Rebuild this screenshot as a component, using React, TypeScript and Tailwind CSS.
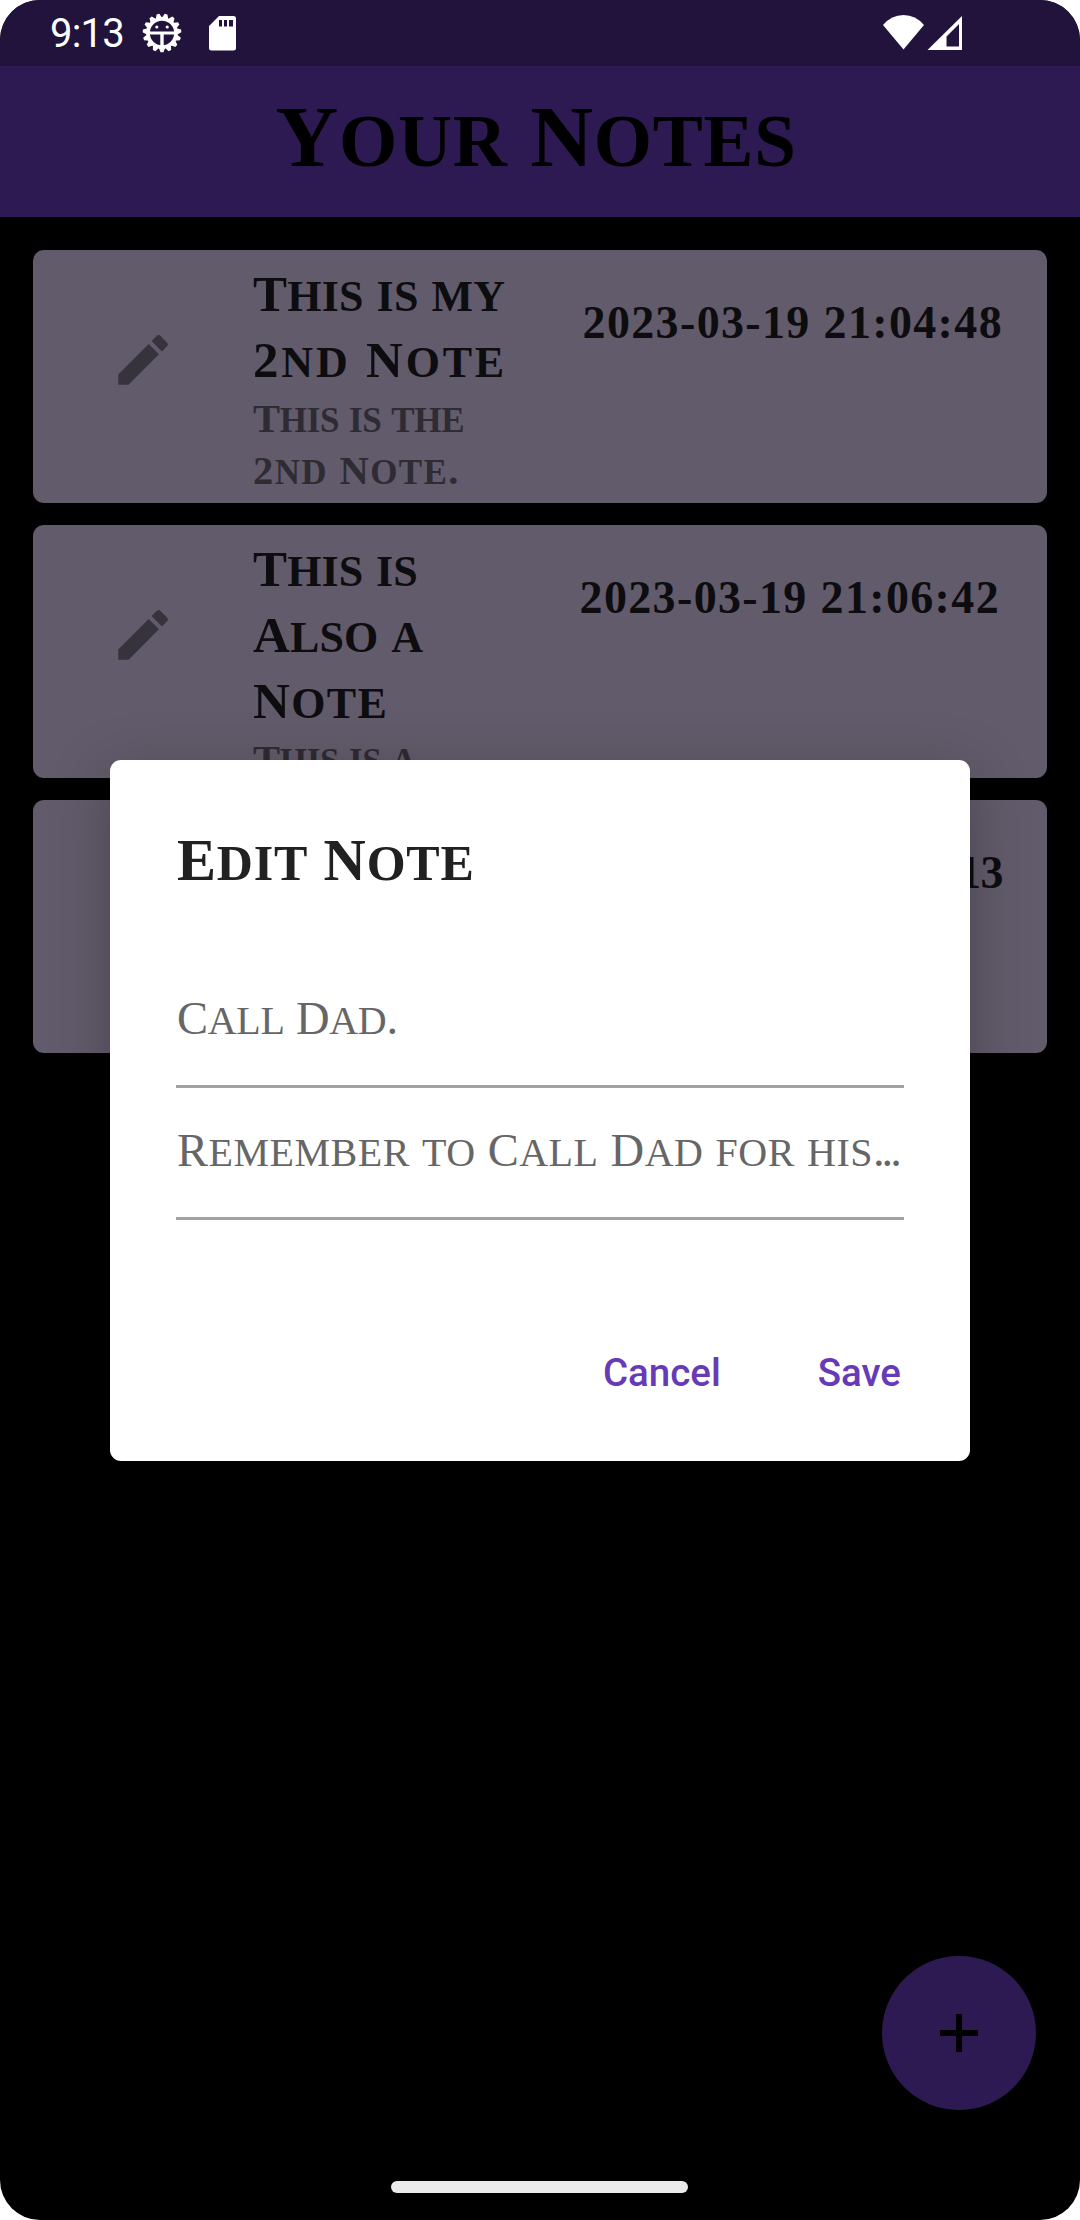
import type { ReactNode } from "react";
import { MdEdit } from "react-icons/md";

/* Capitals keep the full size; lowercase runs are drawn as tall small caps. */
function Caps({ children }: { children: string }) {
  const runs = children.match(/[a-z]+|[^a-z]+/g) ?? [];
  return (
    <>
      {runs.map((run, i) =>
        /[a-z]/.test(run) ? (
          <span key={i} className="text-[1.23em] leading-[0] [font-variant-caps:small-caps]">
            {run}
          </span>
        ) : (
          run
        ),
      )}
    </>
  );
}

type Line = { text: string; className: string };
type Note = { title: Line[]; body: Line[]; date: string; dateClass: string };

const notes: Note[] = [
  {
    title: [
      { text: "This is my", className: "tracking-[0.2px]" },
      { text: "2nd Note", className: "tracking-[2.8px]" },
    ],
    body: [
      { text: "This is the", className: "tracking-[-0.3px]" },
      { text: "2nd Note.", className: "tracking-[1.4px]" },
    ],
    date: "2023-03-19 21:04:48",
    dateClass: "pr-[44px] tracking-[1.35px]",
  },
  {
    title: [
      { text: "This is", className: "tracking-[0.1px]" },
      { text: "Also a", className: "tracking-[0.1px]" },
      { text: "Note", className: "tracking-[1.4px]" },
    ],
    body: [{ text: "This is a", className: "tracking-[-0.3px]" }],
    date: "2023-03-19 21:06:42",
    dateClass: "pr-[47px] tracking-[1.35px]",
  },
  { title: [], body: [], date: "2023-03-19 21:12:13", dateClass: "pr-[44px] tracking-[-0.5px]" },
];

function NoteCard({ note }: { note: Note }) {
  return (
    <li className="flex h-[253px] overflow-hidden rounded-[11px] bg-[#625b6b] font-bold text-[#0d0d0f]">
      <div className="flex w-[220px] items-start pt-[77px] pl-[77px]">
        {note.title.length > 0 && <MdEdit className="size-[66px] text-[#36333c]" />}
      </div>
      <div className="flex-1 pt-[11px] whitespace-nowrap">
        <h2 className="text-[51px] leading-[66px]">
          {note.title.map((l) => (
            <div key={l.text} className={l.className}>
              <Caps>{l.text}</Caps>
            </div>
          ))}
        </h2>
        <div className="text-[40.5px] leading-[52px] text-[#2e2b33]">
          {note.body.map((l) => (
            <div key={l.text} className={l.className}>
              <Caps>{l.text}</Caps>
            </div>
          ))}
        </div>
      </div>
      <time className={"pt-[43px] text-[46px] leading-[60px] whitespace-nowrap " + note.dateClass}>
        {note.date}
      </time>
    </li>
  );
}

function Field({ children }: { children: ReactNode }) {
  return (
    <div className="h-[132px] border-b-[3px] border-[#a2a2a2] pt-[33px] text-[46.5px] leading-[60px] whitespace-nowrap text-[#666666]">
      {children}
    </div>
  );
}

function BugIcon() {
  const teeth = Array.from({ length: 15 }, (_, i) => i * 24 + 12);
  return (
    <svg viewBox="-20 -20 40 40" className="mt-[13px] size-[40px]" fill="white">
      {teeth.map((a) => (
        <path key={a} d="M-3.600 -14 L-1.400 -19.300 H1.400 L3.600 -14Z" transform={`rotate(${a})`} />
      ))}
      <circle r="14" fill="none" stroke="white" strokeWidth="3.600" />
      <path d="M-13 -1.500H13V1.600H1.700V13H-1.700V1.600H-13Z" />
      <circle cx="-5.200" cy="-6" r="1.600" />
      <circle cx="5.200" cy="-6" r="1.600" />
    </svg>
  );
}

function StatusBar() {
  return (
    <div className="flex h-[66px] items-start bg-[#22133d] pl-[50px] text-white">
      <span className="w-[92px] pt-[10px] font-[Roboto] text-[40px] leading-[47px] tracking-[-0.8px]">9:13</span>
      <BugIcon />
      <svg viewBox="0 0 27 35" className="mt-[16px] ml-[27px] h-[35px] w-[27px]">
        <path
          fill="white"
          fillRule="evenodd"
          d="M10 0H24.5Q27 0 27 2.5V32Q27 34.5 24.5 34.5H2.5Q0 34.5 0 32V10ZM10 4V10.5H13V4ZM15 4V10.5H18V4ZM20 4V10.5H24V4Z"
        />
      </svg>
      <svg viewBox="0 0 79 36" className="mt-[15px] mr-[118px] ml-auto h-[36px] w-[79px]" fill="white">
        <path d="M0 10Q8.500 0 20.500 0T41 10L20.500 34.500Z" />
        <path fillRule="evenodd" d="M79 1V35H44.500ZM76 9L63.500 21.500V31.500H76Z" />
      </svg>
    </div>
  );
}

export default function App() {
  return (
    <div className="bg-white">
      <div className="relative flex h-[2220px] w-[1080px] flex-col overflow-hidden rounded-[40px] bg-black font-['Liberation_Serif',serif]">
        <StatusBar />
        <header className="flex h-[151px] items-center justify-center bg-[#2e1a52] pr-[8px] pb-[10px]">
          <h1 className="text-[87px] leading-[100px] font-bold tracking-[0.7px] whitespace-nowrap text-black">
            <Caps>Your Notes</Caps>
          </h1>
        </header>
        <ul className="flex flex-1 flex-col gap-[22px] px-[33px] pt-[33px]">
          {notes.map((n) => (
            <NoteCard key={n.date} note={n} />
          ))}
        </ul>
        <button className="mr-[44px] flex size-[154px] items-center justify-center self-end rounded-full bg-[#2e1a52]">
          <svg viewBox="0 0 38 38" className="size-[38px]">
            <path d="M16 0H22V16H38V22H22V38H16V22H0V16H16Z" />
          </svg>
        </button>
        <div className="mt-[71px] mb-[27px] ml-[391px] h-[12px] w-[297px] rounded-[6px] bg-[#ebebeb]" />

        {/* Edit dialog over the note list */}
        <div
          role="dialog"
          className="absolute top-[759.500px] left-[110px] flex h-[701px] w-[860px] flex-col rounded-[11px] bg-white px-[66px] shadow-[0_14px_60px_rgba(0,0,0,0.25)]"
        >
          <h2 className="h-[196.500px] pt-[61px] pl-[1px] text-[58.5px] leading-[80px] font-bold tracking-[0.8px] text-[#212121]">
            <Caps>Edit Note</Caps>
          </h2>
          <Field>
            <span className="pl-[1px] tracking-[-0.3px]">
              <Caps>Call Dad.</Caps>
            </span>
          </Field>
          <Field>
            <span className="pl-[1px] tracking-[0.5px]">
              <Caps>Remember to Call Dad for his</Caps>
              <span className="tracking-[-3px]">...</span>
            </span>
          </Field>
          <div className="mt-[125px] flex justify-end gap-[97px] pr-[3px] font-[Roboto] text-[38.5px] leading-[56px] font-medium text-[#673ab7]">
            <button>Cancel</button>
            <button>Save</button>
          </div>
        </div>
      </div>
    </div>
  );
}
